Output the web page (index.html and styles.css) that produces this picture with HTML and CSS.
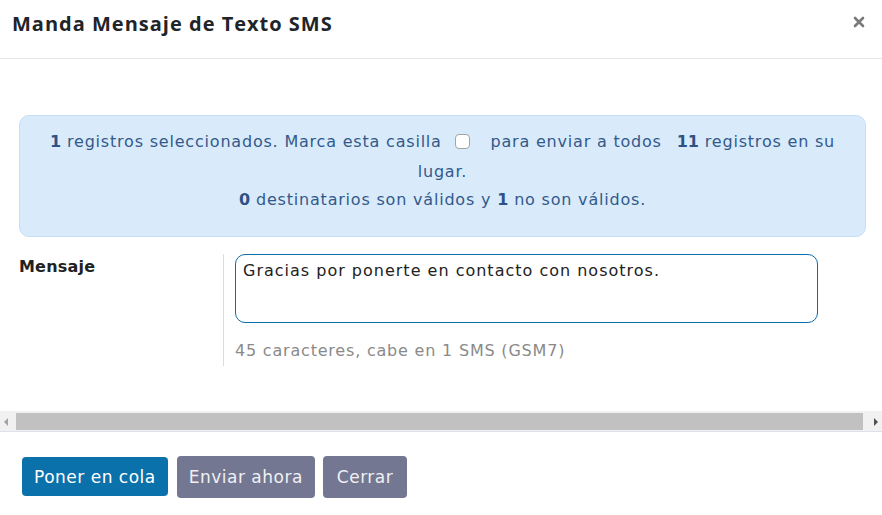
FILE: index.html
```html
<!DOCTYPE html>
<html lang="es">
<head>
<meta charset="utf-8">
<title>Manda Mensaje de Texto SMS</title>
<link rel="stylesheet" href="styles.css">
</head>
<body>
<div class="modal">
  <header class="modal-header">
    <h2 class="modal-title">Manda Mensaje de Texto SMS</h2>
    <button class="close" aria-label="Cerrar">
      <svg width="12" height="12" viewBox="0 0 12 12"><path d="M2 2 L10 10 M10 2 L2 10" stroke="#7a7a7a" stroke-width="2.6" stroke-linecap="round"/></svg>
    </button>
  </header>
  <div class="modal-body">
    <div class="body-inner">
      <div class="alert">
        <p class="alert-first"><b>1</b> registros seleccionados. Marca esta casilla <input type="checkbox" class="cb"> para enviar a todos <b class="gap">11</b> registros en su<br>lugar.</p>
        <p class="alert-second"><b>0</b> destinatarios son válidos y <b>1</b> no son válidos.</p>
      </div>
      <div class="form-row">
        <label class="form-label" for="msg">Mensaje</label>
        <div class="form-field">
          <textarea id="msg" class="msg">Gracias por ponerte en contacto con nosotros.</textarea>
          <div class="help">45 caracteres, cabe en 1 SMS (GSM7)</div>
        </div>
      </div>
    </div>
    <div class="hscroll" aria-hidden="true">
      <span class="arrow arrow-left"></span>
      <span class="thumb"></span>
      <span class="arrow arrow-right"></span>
    </div>
  </div>
  <footer class="modal-footer">
    <button class="btn btn-primary">Poner en cola</button>
    <button class="btn btn-secondary">Enviar ahora</button>
    <button class="btn btn-secondary btn-close">Cerrar</button>
  </footer>
</div>
</body>
</html>
```
FILE: styles.css
```css
* { box-sizing: border-box; }
html, body { margin: 0; padding: 0; background: #fff; }
body {
  font-family: "DejaVu Sans", "Open Sans", sans-serif;
  font-size: 16px;
  color: #212529;
}
.modal {
  width: 882px;
  height: 515px;
  display: flex;
  flex-direction: column;
  background: #fff;
  overflow: hidden;
}
.modal-header {
  display: flex;
  align-items: flex-start;
  justify-content: space-between;
  padding: 9px 12px 18px 12px;
  border-bottom: 1px solid #e4e6ea;
  height: 59px;
  flex: none;
}
.modal-title {
  margin: 0;
  font-family: "Open Sans", sans-serif;
  font-size: 20px;
  line-height: 30px;
  font-weight: 700;
  color: #212529;
  letter-spacing: 1px;
}
.close {
  border: 0;
  background: none;
  padding: 0;
  margin: 6px 4px 0 0;
  width: 14px;
  height: 14px;
  display: flex;
  align-items: center;
  justify-content: center;
}
.modal-body {
  border-bottom: 1px solid #dde1e8;
  flex: none;
}
.body-inner {
  width: 882px;
  padding: 56px 16px 45px 19px;
}
.alert {
  background: #d9ebfb;
  border: 1px solid #c5dff6;
  border-radius: 10px;
  color: #33598a;
  text-align: center;
  padding: 11px 10px 22px;
  line-height: 28px;
  letter-spacing: 0.8px;
}
.alert p { margin: 0; }
.alert b { font-weight: 700; color: #2d5283; letter-spacing: 0; }
.alert-first { line-height: 30px; margin-bottom: -1px !important; }
.cb {
  appearance: none;
  -webkit-appearance: none;
  width: 15px;
  height: 15px;
  border: 1px solid #a3a3a3;
  border-radius: 4px;
  background: #fff;
  margin: 0 15px 0 7px;
  vertical-align: -2px;
}
.gap { margin-left: 9px; }
.form-row {
  display: flex;
  margin-top: 17px;
}
.form-label {
  width: 204px;
  flex: none;
  padding-top: 1px;
  font-weight: 700;
  line-height: 24px;
  color: #222;
  letter-spacing: 0.2px;
}
.form-field {
  border-left: 1px solid #dcdcdc;
  padding: 0 0 3px 11px;
  display: flex;
  flex-direction: column;
}
.msg {
  width: 583px;
  height: 69px;
  border: 1px solid #0b6ea8;
  border-radius: 10px;
  padding: 4px 7px;
  font-family: inherit;
  font-size: 16px;
  line-height: 24px;
  color: #222;
  resize: none;
  letter-spacing: 1px;
  display: block;
}
.help {
  margin-top: 16px;
  line-height: 24px;
  color: #8a8a8a;
  letter-spacing: 0.8px;
}
.hscroll {
  display: flex;
  align-items: stretch;
  height: 20px;
  background: #f1f1f1;
  padding: 2px 0 1px;
}
.arrow {
  width: 16px;
  flex: none;
  position: relative;
}
.arrow::before {
  content: "";
  position: absolute;
  top: 5px;
  border-top: 4px solid transparent;
  border-bottom: 4px solid transparent;
}
.arrow-left::before {
  left: 4px;
  border-right: 4px solid #a3a3a3;
}
.arrow-right::before {
  right: 4px;
  border-left: 4px solid #505050;
}
.thumb {
  flex: 1;
  background: #c1c1c1;
  margin-right: 3px;
}
.modal-footer {
  display: flex;
  align-items: flex-start;
  gap: 8px;
  padding: 24px 22px 0;
}
.btn {
  font-family: inherit;
  font-size: 17px;
  border: 0;
  border-radius: 4px;
  color: #fff;
  padding: 0 12px;
  height: 41px;
  letter-spacing: 0.5px;
}
.btn-primary {
  background: #0b71aa;
  height: 39px;
  margin-top: 1px;
  margin-right: 1px;
}
.btn-secondary {
  background: #737791;
  color: #f0f0f4;
  height: 42px;
}
.btn-close { padding: 0 14px; }
```
